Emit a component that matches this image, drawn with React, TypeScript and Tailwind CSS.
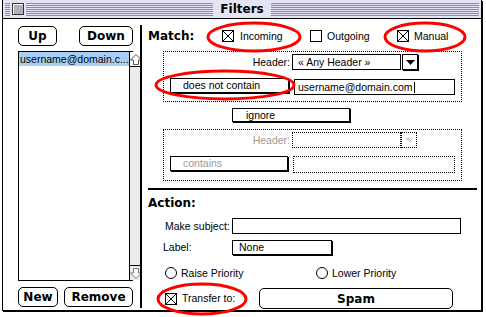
import React from 'react';

// classic mac look: bold "system" face and a small text face
const sys = "[font-family:'DejaVu_Sans',sans-serif] font-bold text-[12px] leading-none";
const small = "[font-family:'Liberation_Sans',Arial,sans-serif] text-[10.5px] leading-none";

const CheckBox: React.FC<{ checked?: boolean }> = ({ checked }) => (
    <svg width="12" height="12" viewBox="0 0 12 12" className="shrink-0">
        <rect x="0.5" y="0.5" width="11" height="11" fill="white" stroke="black" shapeRendering="crispEdges" />
        {checked && <path d="M1 1 L11 11 M11 1 L1 11" stroke="black" strokeWidth="1" />}
    </svg>
);

const Radio: React.FC = () => (
    <svg width="12" height="12" viewBox="0 0 12 12" className="shrink-0">
        <circle cx="6" cy="6" r="5.5" fill="white" stroke="black" />
    </svg>
);

const MacButton: React.FC<{ label: string; className: string }> = ({ label, className }) => (
    <div className={`flex items-center justify-center rounded-[5px] border border-black bg-white ${sys} ${className}`}>
        {label}
    </div>
);

const Popup: React.FC<{ label: string; className: string; dim?: boolean }> = ({ label, className, dim }) => (
    <div className={`flex items-center border border-black bg-white shadow-[1px_1px_0_0_#000] ${small} ${dim ? 'text-[#9a9a9a]' : 'text-black'} ${className}`}>
        {label}
    </div>
);

const Stripes: React.FC<{ className?: string }> = ({ className = '' }) => (
    <div className={`h-[13px] bg-[repeating-linear-gradient(to_bottom,#8c8c9c_0px,#8c8c9c_1px,#e4e4f4_1px,#e4e4f4_2px)] ${className}`} />
);

export default function App() {
    return (
        <div className="relative w-[486px] h-[317px] overflow-hidden bg-white">
            <div className="ml-[2px] w-[480px] h-[311px] flex flex-col border-x border-b border-black bg-white shadow-[1px_1px_0_0_#000]">
                {/* Title bar */}
                <div className="h-[19px] border-b border-black bg-[#e4e4f4] flex items-center px-[2px]">
                    <div className="flex-1 flex items-center">
                        <Stripes className="w-[5px]" />
                        <div className="px-[2px]">
                            <div className="w-[12px] h-[12px] border border-[#333] bg-[#b0b0b8] shadow-[inset_1px_1px_0_#fff]" />
                        </div>
                        <Stripes className="flex-1" />
                    </div>
                    <div className={`px-[7px] ${sys} text-black`}>Filters</div>
                    <Stripes className="flex-1" />
                </div>

                {/* Body */}
                <div className="flex flex-1">
                    {/* Filter list column */}
                    <div className="w-[137px] pl-[15px] pr-[7px] pt-[7px] flex flex-col">
                        <div className="flex justify-between">
                            <MacButton label="Up" className="w-[39px] h-[20px]" />
                            <MacButton label="Down" className="w-[54px] h-[20px]" />
                        </div>
                        <div className="mt-[5px] h-[230px] border border-black flex">
                            <div className="flex-1">
                                <div className={`h-[14px] bg-[#a6cff5] flex items-center pl-[1px] ${small} whitespace-nowrap overflow-hidden`}>
                                    username@domain.c...
                                </div>
                            </div>
                            <div className="w-[16px] border-l border-black bg-[#ececec] flex flex-col justify-between">
                                <div className="h-[15px] border-b border-black bg-white flex items-center justify-center">
                                    <svg width="12" height="11" viewBox="0 0 12 11">
                                        <path d="M6 0.5 L11.5 6 L8.5 6 L8.5 10.5 L3.5 10.5 L3.5 6 L0.5 6 Z" fill="white" stroke="#555" />
                                    </svg>
                                </div>
                                <div className="h-[15px] border-t border-black bg-[#ececec] flex items-center justify-center">
                                    <svg width="12" height="11" viewBox="0 0 12 11">
                                        <path d="M6 10.5 L11.5 5 L8.5 5 L8.5 0.5 L3.5 0.5 L3.5 5 L0.5 5 Z" fill="white" stroke="#777" />
                                    </svg>
                                </div>
                            </div>
                        </div>
                        <div className="mt-[6px] flex justify-between">
                            <MacButton label="New" className="w-[40px] h-[20px]" />
                            <MacButton label="Remove" className="w-[69px] h-[20px]" />
                        </div>
                    </div>

                    {/* Divider */}
                    <div className="w-[2px] bg-black mt-[6px] mb-[2px]" />

                    {/* Filter details */}
                    <div className="flex-1 pl-[6px] flex flex-col">
                        <div className="mt-[11px] h-[12px] flex items-center">
                            <div className={`w-[74px] ${sys}`}>Match:</div>
                            <div className="w-[88px] flex items-center gap-[6px]">
                                <CheckBox checked />
                                <span className={small}>Incoming</span>
                            </div>
                            <div className="w-[87px] flex items-center gap-[5px]">
                                <CheckBox />
                                <span className={small}>Outgoing</span>
                            </div>
                            <div className="flex items-center gap-[5px]">
                                <CheckBox checked />
                                <span className={small}>Manual</span>
                            </div>
                        </div>

                        {/* First condition */}
                        <div className="mt-[9px] ml-[15px] w-[299px] h-[51px] border border-dotted border-black pt-[2px] flex flex-col">
                            <div className="flex items-center">
                                <div className={`w-[128px] text-right pr-[2px] ${small}`}>Header:</div>
                                <div className={`w-[109px] h-[16px] border border-black flex items-center pl-[5px] ${small}`}>« Any Header »</div>
                                <div className="ml-[1px] w-[16px] h-[16px] border border-black shadow-[1px_1px_0_0_#000] flex items-center justify-center">
                                    <svg width="9" height="5" viewBox="0 0 9 5">
                                        <path d="M0 0 L9 0 L4.5 5 Z" fill="black" />
                                    </svg>
                                </div>
                            </div>
                            <div className="mt-[8px] flex items-start">
                                <Popup label="does not contain" className="ml-[6px] w-[119px] h-[15px] pl-[12px]" />
                                <div className={`ml-[5px] mt-[1px] w-[161px] h-[16px] border border-black flex items-center pl-[3px] ${small}`}>
                                    username@domain.com<span className="ml-[1px] w-px h-[11px] bg-black" />
                                </div>
                            </div>
                        </div>

                        <Popup label="ignore" className="mt-[6px] ml-[84px] w-[118px] h-[14px] pl-[13px]" />

                        {/* Second condition (disabled) */}
                        <div className="mt-[7px] ml-[15px] w-[299px] h-[52px] border border-dotted border-black pt-[2px] flex flex-col">
                            <div className="flex items-center">
                                <div className={`w-[128px] text-right pr-[2px] text-[#9a9a9a] ${small}`}>Header:</div>
                                <div className="w-[109px] h-[16px] border border-dotted border-black" />
                                <div className="w-[16px] h-[16px] border border-dotted border-black flex items-center justify-center">
                                    <svg width="9" height="6" viewBox="0 0 9 6">
                                        <path d="M1 1 L4.5 4.5 L8 1 M3 1 L4.5 2.5 L6 1" fill="none" stroke="#777" strokeDasharray="1 1" />
                                    </svg>
                                </div>
                            </div>
                            <div className="mt-[8px] flex items-start">
                                <Popup label="contains" dim className="ml-[6px] w-[118px] h-[15px] pl-[12px]" />
                                <div className="ml-[5px] w-[162px] h-[17px] border border-dotted border-black" />
                            </div>
                        </div>

                        <div className="mt-[7px] w-[329px] h-[2px] bg-black" />

                        {/* Action */}
                        <div className={`mt-[7px] h-[12px] ${sys}`}>Action:</div>

                        <div className="mt-[9px] flex items-center">
                            <div className={`w-[84px] pl-[17px] ${small}`}>Make subject:</div>
                            <div className="w-[229px] h-[16px] border border-black" />
                        </div>

                        <div className="mt-[6px] flex items-center">
                            <div className={`w-[84px] pl-[15px] ${small}`}>Label:</div>
                            <Popup label="None" className="w-[100px] h-[15px] pl-[6px]" />
                        </div>

                        <div className="mt-[12px] pl-[17px] flex items-center">
                            <div className="w-[151px] flex items-center gap-[4px]">
                                <Radio />
                                <span className={small}>Raise Priority</span>
                            </div>
                            <div className="flex items-center gap-[4px]">
                                <Radio />
                                <span className={small}>Lower Priority</span>
                            </div>
                        </div>

                        <div className="mt-[9px] pl-[17px] flex items-center">
                            <div className="w-[94px] flex items-center gap-[5px]">
                                <CheckBox checked />
                                <span className={small}>Transfer to:</span>
                            </div>
                            <MacButton label="Spam" className="w-[194px] h-[21px]" />
                        </div>
                    </div>
                </div>
            </div>

            {/* Red annotation marks */}
            <svg className="absolute inset-0 pointer-events-none" width="486" height="317" viewBox="0 0 486 317">
                <g fill="none" stroke="#ff0000" strokeWidth="3">
                    <ellipse cx="254" cy="37" rx="46" ry="14" />
                    <ellipse cx="425" cy="37" rx="40" ry="14" />
                    <ellipse cx="225" cy="85" rx="69" ry="14" />
                    <ellipse cx="202" cy="299" rx="44" ry="15" />
                </g>
            </svg>
        </div>
    );
}
